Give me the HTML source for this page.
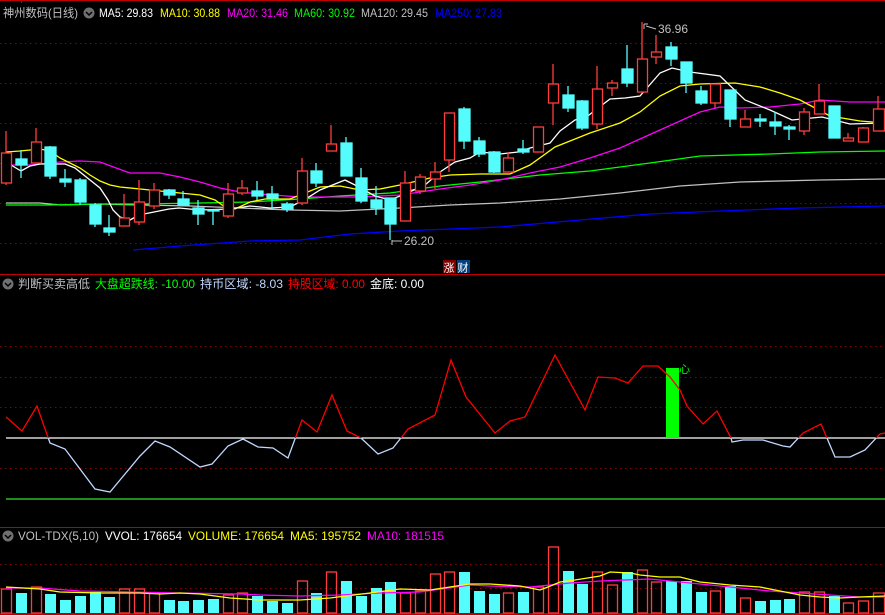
<!DOCTYPE html>
<html><head><meta charset="utf-8"><style>
html,body{margin:0;padding:0;background:#000;width:885px;height:615px;overflow:hidden}
svg{display:block}
text{font-family:"Liberation Sans","Noto Sans CJK SC",sans-serif;font-size:12px}
</style></head><body>
<svg width="885" height="615" viewBox="0 0 885 615" xmlns="http://www.w3.org/2000/svg">
<defs>
<clipPath id="above"><rect x="0" y="280" width="885" height="158"/></clipPath>
<clipPath id="below"><rect x="0" y="438" width="885" height="80"/></clipPath>
</defs>
<rect width="885" height="615" fill="#000"/>
<line x1="0" y1="0.5" x2="885" y2="0.5" stroke="#c00000"/>
<line x1="21.5" y1="0" x2="21.5" y2="3" stroke="#c00000"/>
<g stroke="#8a0000" stroke-dasharray="1.5,3.5" stroke-width="1">
<line x1="0" y1="43.5" x2="885" y2="43.5"/><line x1="0" y1="83.5" x2="885" y2="83.5"/>
<line x1="0" y1="123.5" x2="885" y2="123.5"/><line x1="0" y1="163.5" x2="885" y2="163.5"/>
<line x1="0" y1="203.5" x2="885" y2="203.5"/><line x1="0" y1="243.5" x2="885" y2="243.5"/>
<line x1="0" y1="346.5" x2="885" y2="346.5"/><line x1="0" y1="377.5" x2="885" y2="377.5"/>
<line x1="0" y1="407.5" x2="885" y2="407.5"/><line x1="0" y1="468.5" x2="885" y2="468.5"/>
<line x1="0" y1="564.5" x2="885" y2="564.5"/><line x1="0" y1="588.5" x2="885" y2="588.5"/>
</g>
<line x1="0" y1="274.5" x2="885" y2="274.5" stroke="#c00000"/>
<line x1="0" y1="527.5" x2="885" y2="527.5" stroke="#c00000"/>
<line x1="0" y1="614" x2="885" y2="614" stroke="#c00000" stroke-width="2"/>

<text x="3" y="17" fill="#c0c0c0" textLength="75" lengthAdjust="spacingAndGlyphs">神州数码(日线)</text>
<circle cx="89" cy="13" r="5.5" fill="#707070"/><path d="M86 12l3 3 3-3" stroke="#000" stroke-width="1.5" fill="none"/>
<text x="99" y="17" fill="#fff" textLength="54" lengthAdjust="spacingAndGlyphs">MA5: 29.83</text>
<text x="160" y="17" fill="#ffff00" textLength="60" lengthAdjust="spacingAndGlyphs">MA10: 30.88</text>
<text x="227" y="17" fill="#ff00ff" textLength="61" lengthAdjust="spacingAndGlyphs">MA20: 31.46</text>
<text x="294" y="17" fill="#00ff00" textLength="61" lengthAdjust="spacingAndGlyphs">MA60: 30.92</text>
<text x="361" y="17" fill="#c0c0c0" textLength="67" lengthAdjust="spacingAndGlyphs">MA120: 29.45</text>
<text x="435" y="17" fill="#0000ff" textLength="67" lengthAdjust="spacingAndGlyphs">MA250: 27.83</text>

<g fill="none" stroke-width="1.3">
<polyline stroke="#0000ff" points="133,250 180,246 250,241 300,240 350,234 400,231 450,229 500,227 580,220 650,214 720,211 800,208 885,206"/>
<polyline stroke="#c0c0c0" points="6,203 40,203 60,205 100,204 140,205 190,206 240,208 290,210 340,211 400,208 450,205 500,203 560,199 620,193 680,186 740,182 820,180 885,179"/>
<polyline stroke="#00ff00" points="6,205 50,205 100,204 140,204 200,203 250,202 300,199 340,196 390,193 440,186 480,182 540,175 590,171 650,163 700,156 770,154 820,152 885,151"/>
<polyline stroke="#ff00ff" points="6,165 30,165 60,162 80,161 100,162 130,173 160,173 180,177 200,182 220,188 240,192 260,194 300,197 360,197 400,195 440,189 470,185 500,180 530,173 560,167 590,158 620,148 660,130 700,112 720,107 740,108 770,107 800,104 820,100 850,102 885,102"/>
<polyline stroke="#ffff00" points="6,152 20,151 40,149 50,151 60,158 70,163 80,168 90,175 100,181 110,185 120,187 140,189 160,191 180,193 200,195 215,200 225,207 235,209 250,202 265,199 290,199 320,187 340,186 360,190 380,189 400,185 430,178 450,175 480,174 510,174 530,165 555,147 570,141 590,133 620,123 640,112 660,96 680,86 700,84 735,83 760,87 780,93 800,100 830,116 860,121 885,123"/>
<polyline stroke="#ffffff" points="6,162 21,171 30,166 40,164 65,164 75,168 90,180 100,188 108,200 113,210 120,217 130,220 139,215 154,212 169,209 179,208 200,210 230,209 250,206 270,208 290,207 304,200 320,190 335,184 345,180 355,185 375,196 390,200 405,194 425,185 440,172 455,162 470,158 480,152 500,154 518,152 530,148 550,143 560,131 575,120 585,118 610,99 625,98 640,96 660,73 672,68 690,72 720,76 745,100 770,110 792,120 822,117 850,124 885,123"/>
</g>

<g stroke-width="1.3">
<g stroke="#ff3c3c" fill="#000">
<line x1="6" y1="131" x2="6" y2="185"/><rect x="1.5" y="153" width="10" height="30"/>
<line x1="36" y1="128" x2="36" y2="163"/><rect x="31.5" y="142" width="10" height="21"/>
<line x1="124" y1="194" x2="124" y2="226"/><rect x="119.5" y="218" width="10" height="8"/>
<line x1="139" y1="180" x2="139" y2="225"/><rect x="134.5" y="202" width="10" height="20"/>
<line x1="154" y1="183" x2="154" y2="209"/><rect x="149.5" y="190" width="10" height="16"/>
<line x1="228" y1="183" x2="228" y2="218"/><rect x="223.5" y="194" width="10" height="22"/>
<line x1="242" y1="180" x2="242" y2="195"/><rect x="237.5" y="188" width="10" height="5"/>
<line x1="302" y1="158" x2="302" y2="205"/><rect x="297.5" y="171" width="10" height="32"/>
<line x1="331" y1="125" x2="331" y2="151"/><rect x="326.5" y="144" width="10" height="7"/>
<line x1="405" y1="171" x2="405" y2="221"/><rect x="400.5" y="183" width="10" height="38"/>
<line x1="420" y1="174" x2="420" y2="194"/><rect x="415.5" y="177" width="10" height="14"/>
<line x1="435" y1="162" x2="435" y2="189"/><rect x="430.5" y="172" width="10" height="7"/>
<line x1="449" y1="113" x2="449" y2="172"/><rect x="444.5" y="113" width="10" height="47"/>
<line x1="508" y1="152" x2="508" y2="172"/><rect x="503.5" y="158" width="10" height="14"/>
<line x1="538" y1="127" x2="538" y2="152"/><rect x="533.5" y="127" width="10" height="25"/>
<line x1="553" y1="64" x2="553" y2="125"/><rect x="548.5" y="84" width="10" height="19"/>
<line x1="597" y1="66" x2="597" y2="129"/><rect x="592.5" y="89" width="10" height="35"/>
<line x1="612" y1="80" x2="612" y2="96"/><rect x="607.5" y="83" width="10" height="5"/>
<line x1="642" y1="22" x2="642" y2="93"/><rect x="637.5" y="59" width="10" height="33"/>
<line x1="656" y1="35" x2="656" y2="64"/><rect x="651.5" y="52" width="10" height="5"/>
<line x1="715" y1="84" x2="715" y2="108"/><rect x="710.5" y="84" width="10" height="19"/>
<line x1="745" y1="110" x2="745" y2="127"/><rect x="740.5" y="119" width="10" height="8"/>
<line x1="804" y1="108" x2="804" y2="135"/><rect x="799.5" y="112" width="10" height="19"/>
<line x1="819" y1="84" x2="819" y2="114"/><rect x="814.5" y="101" width="10" height="13"/>
<line x1="848" y1="133" x2="848" y2="141"/><rect x="843.5" y="138" width="10" height="3"/>
<line x1="863" y1="127" x2="863" y2="142"/><rect x="858.5" y="128" width="10" height="14"/>
<line x1="878" y1="96" x2="878" y2="131"/><rect x="873.5" y="109" width="11" height="22"/>
</g>
<g stroke="#54fcfc" fill="#54fcfc">
<line x1="21" y1="150" x2="21" y2="178"/><rect x="16" y="159" width="11" height="6"/>
<line x1="50" y1="146" x2="50" y2="179"/><rect x="45" y="147" width="11" height="29"/>
<line x1="65" y1="169" x2="65" y2="187"/><rect x="60" y="179" width="11" height="3"/>
<line x1="80" y1="178" x2="80" y2="205"/><rect x="75" y="180" width="11" height="22"/>
<line x1="95" y1="203" x2="95" y2="227"/><rect x="90" y="205" width="11" height="19"/>
<line x1="109" y1="215" x2="109" y2="236"/><rect x="104" y="228" width="11" height="4"/>
<line x1="169" y1="189" x2="169" y2="199"/><rect x="164" y="190" width="11" height="5"/>
<line x1="183" y1="191" x2="183" y2="206"/><rect x="178" y="199" width="11" height="6"/>
<line x1="198" y1="200" x2="198" y2="225"/><rect x="193" y="208" width="11" height="6"/>
<line x1="213" y1="210" x2="213" y2="225"/><rect x="208" y="210" width="11" height="1"/>
<line x1="257" y1="181" x2="257" y2="200"/><rect x="252" y="191" width="11" height="5"/>
<line x1="272" y1="186" x2="272" y2="210"/><rect x="267" y="194" width="11" height="4"/>
<line x1="287" y1="202" x2="287" y2="212"/><rect x="282" y="204" width="11" height="5"/>
<line x1="316" y1="163" x2="316" y2="187"/><rect x="311" y="171" width="11" height="12"/>
<line x1="346" y1="137" x2="346" y2="176"/><rect x="341" y="143" width="11" height="33"/>
<line x1="361" y1="168" x2="361" y2="203"/><rect x="356" y="178" width="11" height="23"/>
<line x1="376" y1="186" x2="376" y2="215"/><rect x="371" y="200" width="11" height="8"/>
<line x1="390" y1="198" x2="390" y2="240"/><rect x="385" y="198" width="11" height="26"/>
<line x1="464" y1="107" x2="464" y2="149"/><rect x="459" y="109" width="11" height="32"/>
<line x1="479" y1="137" x2="479" y2="157"/><rect x="474" y="141" width="11" height="13"/>
<line x1="494" y1="151" x2="494" y2="173"/><rect x="489" y="152" width="11" height="20"/>
<line x1="523" y1="140" x2="523" y2="154"/><rect x="518" y="149" width="11" height="3"/>
<line x1="568" y1="86" x2="568" y2="112"/><rect x="563" y="95" width="11" height="13"/>
<line x1="582" y1="100" x2="582" y2="130"/><rect x="577" y="101" width="11" height="27"/>
<line x1="627" y1="45" x2="627" y2="87"/><rect x="622" y="69" width="11" height="14"/>
<line x1="671" y1="42" x2="671" y2="66"/><rect x="666" y="47" width="11" height="12"/>
<line x1="686" y1="62" x2="686" y2="93"/><rect x="681" y="62" width="11" height="21"/>
<line x1="701" y1="86" x2="701" y2="105"/><rect x="696" y="91" width="11" height="12"/>
<line x1="730" y1="90" x2="730" y2="127"/><rect x="725" y="90" width="11" height="29"/>
<line x1="760" y1="114" x2="760" y2="127"/><rect x="755" y="119" width="11" height="2"/>
<line x1="775" y1="112" x2="775" y2="135"/><rect x="770" y="122" width="11" height="4"/>
<line x1="789" y1="125" x2="789" y2="140"/><rect x="784" y="127" width="11" height="2"/>
<line x1="834" y1="106" x2="834" y2="138"/><rect x="829" y="106" width="11" height="32"/>
</g>
</g>
<path d="M644 24 L644 29 M644 24 L648 24 M646 26 L656 29" stroke="#c0c0c0" fill="none"/>
<text x="658" y="33" fill="#c0c0c0">36.96</text>
<path d="M392 240 L392 245 M392 241 L402 241" stroke="#c0c0c0" fill="none"/>
<text x="404" y="245" fill="#c0c0c0">26.20</text>
<rect x="443" y="260" width="13" height="13" fill="#800000"/>
<rect x="457" y="260" width="13" height="13" fill="#004080"/>
<text x="443.5" y="271.5" fill="#fff" style="font-size:11px">涨</text>
<text x="457.5" y="271.5" fill="#fff" style="font-size:11px">财</text>

<circle cx="8" cy="284" r="5.5" fill="#707070"/><path d="M5 283l3 3 3-3" stroke="#000" stroke-width="1.5" fill="none"/>
<text x="18" y="288" fill="#c0c0c0" textLength="72" lengthAdjust="spacingAndGlyphs">判断买卖高低</text>
<text x="95" y="288" fill="#00ff00" textLength="100" lengthAdjust="spacingAndGlyphs">大盘超跌线: -10.00</text>
<text x="200" y="288" fill="#c0d8ff" textLength="83" lengthAdjust="spacingAndGlyphs">持币区域: -8.03</text>
<text x="288" y="288" fill="#ff0000" textLength="77" lengthAdjust="spacingAndGlyphs">持股区域: 0.00</text>
<text x="370" y="288" fill="#fff" textLength="54" lengthAdjust="spacingAndGlyphs">金底: 0.00</text>

<line x1="6" y1="438" x2="885" y2="438" stroke="#fff" stroke-width="1.3"/>
<line x1="6" y1="499" x2="885" y2="499" stroke="#30e030" stroke-width="1.3"/>
<rect x="666" y="368" width="13" height="70" fill="#00ff00"/>
<text x="679" y="373" fill="#00ff00" style="font-size:11px">心</text>
<g fill="none" stroke-width="1.3">
<polyline clip-path="url(#below)" stroke="#c0d8ff" points="6,417 22,431 37,406 50,443 65,449 95,489 110,492 140,456 155,441 170,447 200,467 212,464 228,446 243,439 258,447 273,448 288,458 302,420 317,432 332,395 347,431 361,438 378,454 393,448 408,429 435,415 440,398 451,360 466,397 495,433 510,421 525,417 555,355 585,410 598,377 615,378 628,383 643,366 658,366 670,377 680,390 687,406 703,424 717,411 731,438 732,442 743,440 763,440 783,446 790,447 803,433 821,424 835,457 850,457 865,450 880,434 885,433"/>
<polyline clip-path="url(#above)" stroke="#ff0000" points="6,417 22,431 37,406 50,443 65,449 95,489 110,492 140,456 155,441 170,447 200,467 212,464 228,446 243,439 258,447 273,448 288,458 302,420 317,432 332,395 347,431 361,438 378,454 393,448 408,429 435,415 440,398 451,360 466,397 495,433 510,421 525,417 555,355 585,410 598,377 615,378 628,383 643,366 658,366 670,377 680,390 687,406 703,424 717,411 731,438 732,442 743,440 763,440 783,446 790,447 803,433 821,424 835,457 850,457 865,450 880,434 885,433"/>
</g>

<circle cx="8" cy="536" r="5.5" fill="#707070"/><path d="M5 535l3 3 3-3" stroke="#000" stroke-width="1.5" fill="none"/>
<text x="18" y="540" fill="#c0c0c0" textLength="81" lengthAdjust="spacingAndGlyphs">VOL-TDX(5,10)</text>
<text x="105" y="540" fill="#fff" textLength="77" lengthAdjust="spacingAndGlyphs">VVOL: 176654</text>
<text x="188" y="540" fill="#ffff00" textLength="96" lengthAdjust="spacingAndGlyphs">VOLUME: 176654</text>
<text x="290" y="540" fill="#ffff00" textLength="71" lengthAdjust="spacingAndGlyphs">MA5: 195752</text>
<text x="367" y="540" fill="#ff00ff" textLength="77" lengthAdjust="spacingAndGlyphs">MA10: 181515</text>

<g stroke="#ff3c3c" fill="none" stroke-width="1.3">
<rect x="1.5" y="589" width="10" height="24"/><rect x="31.5" y="587" width="10" height="26"/>
<rect x="119.5" y="589" width="10" height="24"/><rect x="134.5" y="589" width="10" height="24"/>
<rect x="149.5" y="593" width="10" height="20"/><rect x="223.5" y="595" width="10" height="18"/>
<rect x="237.5" y="593" width="10" height="20"/><rect x="297.5" y="581" width="10" height="32"/>
<rect x="326.5" y="572" width="10" height="41"/><rect x="400.5" y="593" width="10" height="20"/>
<rect x="415.5" y="591" width="10" height="22"/><rect x="430.5" y="574" width="10" height="39"/>
<rect x="444.5" y="572" width="10" height="41"/><rect x="503.5" y="593" width="10" height="20"/>
<rect x="533.5" y="587" width="10" height="26"/><rect x="548.5" y="547" width="10" height="66"/>
<rect x="592.5" y="572" width="10" height="41"/><rect x="607.5" y="585" width="10" height="28"/>
<rect x="637.5" y="570" width="10" height="43"/><rect x="651.5" y="582" width="10" height="31"/>
<rect x="710.5" y="591" width="10" height="22"/><rect x="740.5" y="598" width="10" height="15"/>
<rect x="799.5" y="592" width="10" height="21"/><rect x="814.5" y="592" width="10" height="21"/>
<rect x="843.5" y="603" width="10" height="10"/><rect x="858.5" y="601" width="10" height="12"/>
<rect x="873.5" y="593" width="11" height="20"/>
</g>
<g fill="#54fcfc">
<rect x="16" y="593" width="11" height="20"/><rect x="45" y="594" width="11" height="19"/>
<rect x="60" y="600" width="11" height="13"/><rect x="75" y="596" width="11" height="17"/>
<rect x="90" y="592" width="11" height="21"/><rect x="104" y="597" width="11" height="16"/>
<rect x="164" y="600" width="11" height="13"/><rect x="178" y="601" width="11" height="12"/>
<rect x="193" y="600" width="11" height="13"/><rect x="208" y="599" width="11" height="14"/>
<rect x="252" y="596" width="11" height="17"/><rect x="267" y="601" width="11" height="12"/>
<rect x="282" y="603" width="11" height="10"/><rect x="311" y="593" width="11" height="20"/>
<rect x="341" y="581" width="11" height="32"/><rect x="356" y="596" width="11" height="17"/>
<rect x="371" y="588" width="11" height="25"/><rect x="385" y="582" width="11" height="31"/>
<rect x="459" y="572" width="11" height="41"/><rect x="474" y="591" width="11" height="22"/>
<rect x="489" y="594" width="11" height="19"/><rect x="518" y="592" width="11" height="21"/>
<rect x="563" y="571" width="11" height="42"/><rect x="577" y="584" width="11" height="29"/>
<rect x="622" y="572" width="11" height="41"/><rect x="666" y="581" width="11" height="32"/>
<rect x="681" y="581" width="11" height="32"/><rect x="696" y="592" width="11" height="21"/>
<rect x="725" y="586" width="11" height="27"/><rect x="755" y="601" width="11" height="12"/>
<rect x="770" y="600" width="11" height="13"/><rect x="784" y="599" width="11" height="14"/>
<rect x="829" y="596" width="11" height="17"/>
</g>
<g fill="none" stroke-width="1.3">
<polyline stroke="#ff00ff" points="6,588 40,588 80,591 130,592 180,593 240,594 260,595 300,596 340,595 380,593 420,592 470,585 490,586 530,587 550,585 570,583 600,581 650,579 680,582 700,584 740,588 770,591 800,593 830,595 860,597 885,597"/>
<polyline stroke="#ffff00" points="6,587 40,589 60,592 100,593 140,593 160,594 180,593 200,594 230,598 260,600 300,600 330,598 370,593 400,589 430,590 470,584 490,584 520,586 540,590 548,587 560,582 575,580 600,576 610,572 630,573 640,575 660,577 680,577 700,582 730,585 760,587 780,591 800,595 820,597 840,598 860,597 885,596"/>
</g>
</svg>
</body></html>
